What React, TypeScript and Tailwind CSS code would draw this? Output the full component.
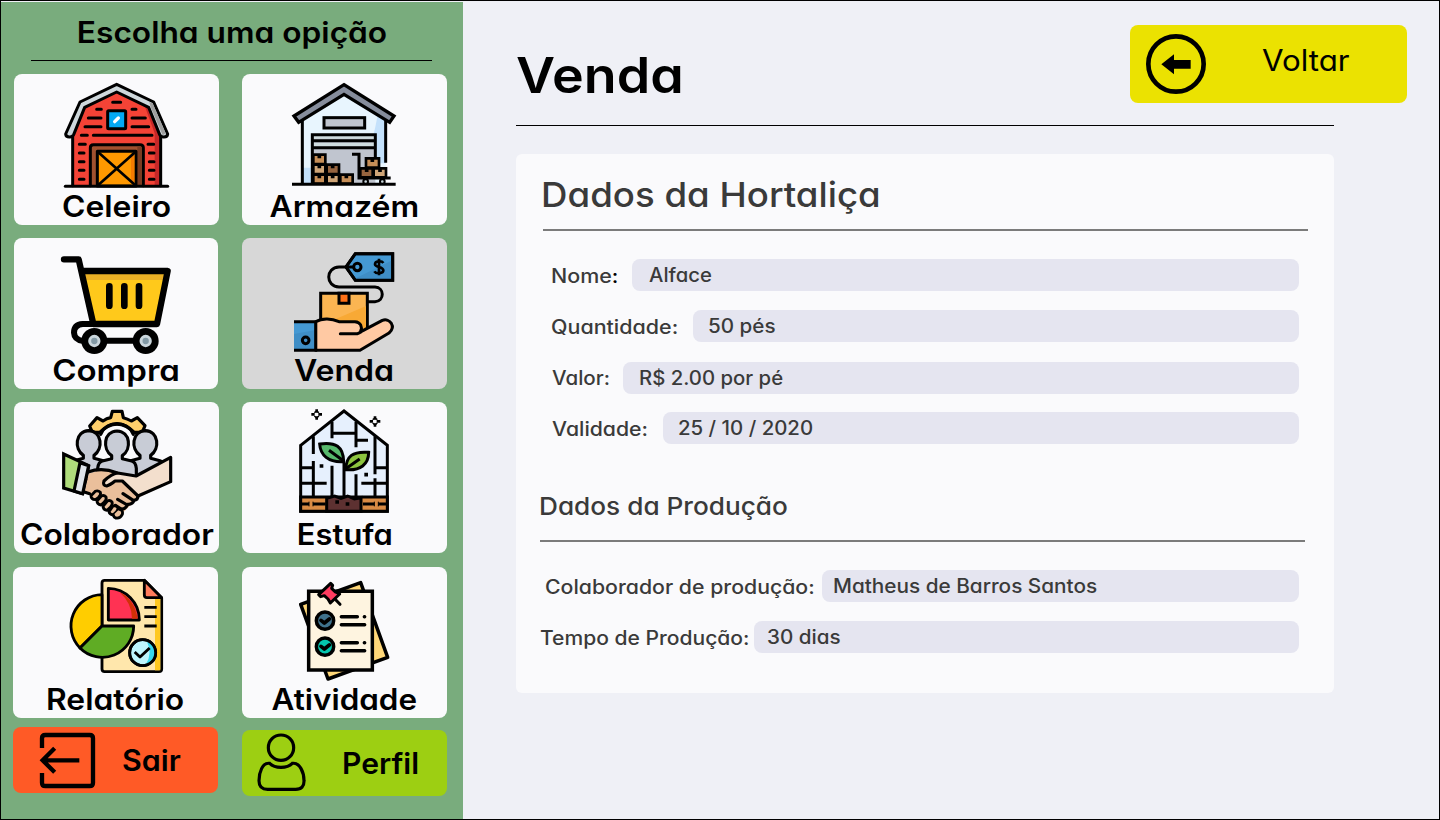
import type { ReactNode } from 'react'

function BarnIcon() {
  return (
    <svg viewBox="42 222 615 360" className="block h-[120px] w-[205px]" fill="none" stroke="#000" strokeWidth="9" strokeLinecap="round" strokeLinejoin="round">
      <path d="M218 557V380L252 320L350 274L448 320L482 380V557Z" fill="#f44336" stroke="none" />
      <path d="M432 312L448 320L482 400V557H464V400Z" fill="#c62828" stroke="none" />
      <path d="M218 412V557M482 412V557" />
      <path d="M350 253L461 306L503 402Q502 412 490 411Q482 411 479 404L446 322L350 276L254 322L221 404Q218 411 210 411Q198 412 197 402L240 306Z" fill="#cfd8dc" />
      <path d="M448 307L458 310L497 400L488 406L452 322Z" fill="#9e9e9e" stroke="none" />
      <path d="M338 307H362M290 328H304M396 328H408M265 354H303M396 354H436M255 380H303M396 380H446M244 406H262M280 406H456M238 433H256M444 433H461M238 459H252M448 459H462M238 485H252M448 485H462M238 511H252M448 511H462M238 538H252M448 538H462" />
      <rect x="323" y="332" width="54" height="54" rx="3" fill="#03a9f4" />
      <path d="M344 365L355 354" stroke="#fff" strokeWidth="10" />
      <path d="M271 557V443Q271 434 280 434H420Q430 434 430 443V557" fill="#a1512f" />
      <path d="M412 438H422L426 443V556H412Z" fill="#7a3c22" stroke="none" />
      <rect x="292" y="454" width="116" height="104" fill="#ff9800" />
      <path d="M393 459H403V553H393Z" fill="#f57c00" stroke="none" />
      <path d="M294 456L406 556M406 456L294 556" strokeWidth="8" />
      <path d="M196 559H503" />
    </svg>
  )
}

function WarehouseIcon() {
  return (
    <svg viewBox="21 222 615 360" className="block h-[120px] w-[205px]" fill="none" stroke="#000" strokeWidth="9">
      <path d="M202 552V360L327 283L452 360V552Z" fill="#e8f5fe" stroke="none" />
      <path d="M428 345L452 360V490H390Q415 420 428 345ZM204 503H230V552H204Z" fill="#c4e1fb" stroke="none" />
      <path d="M202 362V552M452 362V488" />
      <path d="M327 254L477 348L464 367L327 283L191 367L177 348Z" fill="#868d9c" strokeWidth="10" />
      <rect x="267" y="353" width="122" height="31" fill="#c0c5cf" />
      <path d="M232 552V404H421V552" fill="#c0c5cf" stroke="none" />
      <path d="M232 411H421M232 433H421" stroke="#cfdcdf" strokeWidth="10" />
      <path d="M232 552V404H421V472M232 422H421M232 443H421" />
      <g strokeWidth="8">
        <path d="M235 464H271V492H235Z" fill="#c68e57" />
        <path d="M235 494H271V522H235Z" fill="#cfa577" />
        <path d="M275 494H312V522H275Z" fill="#96643f" />
        <path d="M235 524H271V551H235Z" fill="#c68e57" />
        <path d="M275 524H312V551H275Z" fill="#cfa577" />
        <path d="M316 524H353V551H316Z" fill="#c68e57" />
        <path d="M376 505H413V532H376Z" fill="#96643f" />
        <path d="M416 505H453V532H416Z" fill="#cfa577" />
        <path d="M393 475H432V503H393Z" fill="#c68e57" />
      </g>
      <path d="M253 464V475M253 494V505M293 494V505M253 524V535M293 524V535M334 524V535M395 505V516M435 505V516M412 475V486" strokeWidth="11" />
      <path d="M351 463H372V534H467" />
      <circle cx="392" cy="545" r="7" fill="#c9d6dc" strokeWidth="6" />
      <circle cx="442" cy="545" r="7" fill="#c9d6dc" strokeWidth="6" />
      <path d="M171 553H482" />
    </svg>
  )
}

function CartIcon() {
  return (
    <svg viewBox="42 24 612 360" className="block h-[120px] w-[204px]" fill="none" stroke="#000" strokeWidth="19" strokeLinecap="round" strokeLinejoin="round">
      <path d="M247 123H503L471 282H282Z" fill="#ffc91b" stroke="none" />
      <path d="M250 130H496L492 150H254Z" fill="#e9af25" stroke="none" />
      <path d="M192 88H236L280 282H471L503 123H247" />
      <path d="M328 169V227M373 169V227M417 169V227" strokeWidth="20" />
      <path d="M281 282H248Q222 284 222 308Q223 330 250 333" strokeWidth="18" />
      <path d="M283 332H437" strokeWidth="18" />
      <circle cx="283" cy="333" r="39" fill="#000" stroke="none" />
      <circle cx="437" cy="333" r="39" fill="#000" stroke="none" />
      <circle cx="283" cy="333" r="14" fill="#8299a5" stroke="#cad6dc" strokeWidth="9" />
      <circle cx="437" cy="333" r="14" fill="#8299a5" stroke="#cad6dc" strokeWidth="9" />
    </svg>
  )
}

function SellIcon() {
  return (
    <svg viewBox="21 24 615 360" className="block h-[120px] w-[205px]" fill="none" stroke="#000" strokeWidth="9">
      <path d="M361 71H473V151H361L333 111Z" fill="#4599d3" />
      <path d="M469 92L362 145L364 147H469Z" fill="#3f8ec6" stroke="none" />
      <path d="M361 71H473V151H361L333 111Z" />
      <path d="M445 99C440 91 420 92 420 103C420 113 445 109 445 121C445 132 423 132 418 124M432 86V136" strokeWidth="8" />
      <circle cx="367" cy="111" r="11" fill="#4599d3" />
      <path d="M356 111H312C271 112 271 170 312 171H420C449 172 449 214 420 215H398" />
      <path d="M257 190H397V310H257Z" fill="#fbb552" />
      <path d="M393 228L290 272L380 290L393 296Z" fill="#f8a935" stroke="none" />
      <path d="M312 190H342V220H312Z" fill="#ff7016" />
      <path d="M242 275C262 263 290 265 312 275H360C377 276 382 290 378 305L442 271C465 263 484 290 462 309L375 361H242Z" fill="#ffc9a3" strokeLinejoin="round" />
      <path d="M316 311H367Q379 309 379 298" strokeLinecap="round" />
      <path d="M177 275H242V361H177Z" fill="#4599d3" stroke="none" />
      <path d="M177 312L242 300V361H177Z" fill="#3f8ec6" stroke="none" />
      <path d="M177 275H242V361H177" />
      <circle cx="212" cy="331" r="10" strokeWidth="9" />
    </svg>
  )
}

function TeamIcon() {
  const head = 'M-16 43V34C-44 15 -41 -38 0 -40C41 -38 44 15 16 34V43L44 50Q56 53 58 72V110H-58V72Q-56 53 -44 50Z'
  return (
    <svg viewBox="42 21 615 360" className="block h-[120px] w-[205px]" fill="none" stroke="#000" strokeWidth="9.5" strokeLinejoin="round" strokeLinecap="round">
      <path d="M269 93L291 68L309 78Q320 70 332 68L337 49H366L370 68Q382 71 394 78L412 68L435 92L427 112H403Q351 62 299 112H277Z" fill="#ffcf6c" />
      <path d="M302 118Q314 88 351 86Q388 88 400 118" />
      <g fill="#c8ccd6">
        <path d={head} transform="translate(266 147)" />
        <path d={head} transform="translate(436 147)" />
        <path d={head} transform="translate(351 148)" />
      </g>
      <path d="M191 177L266 212L248 296L191 279Z" fill="#afdc7b" strokeLinejoin="miter" />
      <path d="M512 187L410 243L351 230L300 225L266 236L254 290L274 300L345 360L362 360L414 308L512 262Z" fill="#eabf9b" stroke="none" />
      <path d="M264 231Q305 216 350 233" />
      <path d="M240 203L266 212L248 296L222 288Z" fill="#dfe4ea" />
      <path d="M253 291L269 296" />
      <path d="M512 187L408 243L353 234Q335 236 312 258Q307 272 320 273Q330 270 345 258H367L414 303L512 260Z" fill="#f3dfcd" />
      <path d="M414 303Q414 315 402 316Q398 329 383 328Q378 342 365 342" fill="#eabf9b" />
      <path d="M369 296L401 317M353 313L382 330M346 331L366 344" />
      <g fill="#eabf9b" strokeWidth="8.5">
        <path d="M286 289Q294 285 301 292Q304 300 295 308L286 314Q273 313 273 302Z" />
        <path d="M304 303Q312 299 318 306Q321 314 312 322L303 330Q291 328 291 318Z" />
        <path d="M322 318Q330 314 336 321Q339 329 330 338L321 346Q309 344 309 334Z" />
        <path d="M339 333Q348 330 353 337Q356 344 347 353L339 360Q328 358 327 350Z" />
        <path d="M358 343Q370 345 367 358Q360 372 347 369Q341 366 340 360" />
      </g>
    </svg>
  )
}

function GreenhouseIcon() {
  return (
    <svg viewBox="21 21 615 360" className="block h-[120px] w-[205px]" fill="none" stroke="#000" strokeWidth="9">
      <path d="M197 151L327 48L457 151V349H197Z" fill="#e6f0fd" />
      <path d="M291 80V130M291 115H363M363 80V157M363 136H399M235 124V177M420 124V238M235 198V304M197 218H235M420 218H457M197 265H275M379 265H457M420 250V304M291 212V304M363 238V304" />
      <path d="M197 306H457V349H197Z" fill="#d98b44" />
      <path d="M197 327H222M234 327H272M384 327H418M430 327H457" />
      <path d="M228 306V318M228 336V349M424 306V318M424 336V349" stroke="none" />
      <path d="M222 320V334M234 320V334M418 320V334M430 320V334" strokeWidth="3" />
      <path d="M275 349V310L299 303L318 310L338 303L358 312L378 308V349Z" fill="#5d3131" />
      <path d="M301 321H312M332 327H343" strokeWidth="11" />
      <path d="M327 305V204" />
      <path d="M254 147C302 140 325 155 326 200C280 203 256 180 254 147Z" fill="#57b96c" />
      <path d="M282 166L327 199" />
      <path d="M401 172C353 168 334 183 332 224C376 228 401 208 401 172Z" fill="#8cc43f" />
      <path d="M374 192L330 223" />
      <path d="M254 213H265M388 239H399" strokeWidth="11" />
      <path d="M245 43V53M245 64V74M229 58H239M250 58H261M420 64V74M420 85V95M404 79H414M425 79H436" strokeWidth="8" />
      <path d="M238 53L245 48L252 53M238 63L245 69L252 63M413 74L420 69L427 74M413 84L420 90L427 84" strokeWidth="4" />
    </svg>
  )
}

function ReportIcon() {
  return (
    <svg viewBox="39 21 615 360" className="block h-[120px] w-[205px]" fill="none" stroke="#000" strokeWidth="8.5" strokeLinejoin="round">
      <path d="M314 61H433L485 113V327Q485 335 477 335H314Q306 335 306 327V69Q306 61 314 61Z" fill="#ffe7ac" />
      <path d="M465 116H481V331H465Z" fill="#ffc81f" stroke="none" />
      <path d="M433 61V105Q433 113 441 113H485Z" fill="#ff7c5c" />
      <path d="M433 142H470M433 170H470M433 198H470" />
      <path d="M306 198V104A94 94 0 0 0 240 264Z" fill="#ffcd00" />
      <path d="M306 198H401A94 94 0 0 1 240 264Z" fill="#5fac24" />
      <path d="M325 180V85A94 94 0 0 1 418 180Z" fill="#ff3253" />
      <path d="M359 97Q403 117 413 176H396Q396 130 359 97Z" fill="#d13107" stroke="none" />
      <circle cx="428" cy="278" r="39" fill="#bdf5fd" />
      <path d="M441 245A35 35 0 0 1 438 312Q458 280 441 245Z" fill="#37d8ee" stroke="none" />
      <path d="M404 276L420 291L449 264" />
      <circle cx="428" cy="278" r="39" />
    </svg>
  )
}

function TasksIcon() {
  return (
    <svg viewBox="21 21 615 360" className="block h-[120px] w-[205px]" fill="none" stroke="#000" strokeWidth="10.5" strokeLinejoin="round">
      <path d="M197 133L377 68L458 292L279 357Z" fill="#ffd778" />
      <path d="M221 94H412V330H221Z" fill="#fef4e0" strokeLinejoin="miter" />
      <path d="M287 70L293 76L290 85L301 96L314 102L286 129L279 117L268 107L257 110L251 104Z" fill="#ff3c60" strokeWidth="9" />
      <path d="M302 119L315 133" strokeLinecap="round" strokeWidth="9" />
      <circle cx="270" cy="182" r="26" fill="#3f728d" />
      <circle cx="270" cy="260" r="26" fill="#04c5ad" />
      <path d="M258 181L268 189L283 177M258 259L268 267L283 255" strokeLinecap="round" strokeWidth="11" />
      <path d="M319 170H367M388 170H389M319 194H389M319 248H367M388 248H389M319 272H389" strokeLinecap="round" />
    </svg>
  )
}

function Card({ icon, label, box, stretch }: { icon: ReactNode; label: string; box: string; stretch: string }) {
  return (
    <button type="button" className={`flex h-[151px] flex-col items-center rounded-lg ${box}`}>
      {icon}
      <span className={`whitespace-nowrap text-[29.5px] leading-6 font-semibold ${stretch}`}>{label}</span>
    </button>
  )
}

type FieldProps = { label: ReactNode; value: string; row: string; labelBox: string; labelStretch: string; inputPad: string; valueStretch: string }

function Field({ label, value, row, labelBox, labelStretch, inputPad, valueStretch }: FieldProps) {
  return (
    <div className={`flex h-8 pr-[35px] text-[19.5px] leading-8 font-medium whitespace-nowrap text-[#3a3a3a] ${row}`}>
      <div className={`shrink-0 ${labelBox}`}>
        <span className={`inline-block origin-left ${labelStretch}`}>{label}</span>
      </div>
      <div className={`h-8 flex-1 rounded-lg bg-[#e5e5f0] ${inputPad}`}>
        <span className={`inline-block origin-left ${valueStretch}`}>{value}</span>
      </div>
    </div>
  )
}

export default function App() {
  return (
    <div className="flex h-[820px] w-[1440px] overflow-hidden border border-black bg-[#eff0f6] font-['Inter','Liberation_Sans',sans-serif] text-black [font-feature-settings:'cv11']">
      <aside className="mt-px flex w-[462px] shrink-0 flex-col bg-[#79ac7d]">
        <h2 className="mt-[15px] scale-x-[1.074] text-center text-[29.5px] leading-[30px] font-semibold">Escolha uma opição</h2>
        <div className="mt-[13px] ml-[30px] h-px w-[401px] bg-black" />
        <div className="mt-[13px] flex gap-[23px] pl-3">
          <div className="flex w-[206px] flex-col">
            <Card icon={<BarnIcon />} label="Celeiro" box="ml-px w-[205px] bg-[#fafafc]" stretch="scale-x-[1.079]" />
            <Card icon={<CartIcon />} label="Compra" box="mt-[13px] ml-px w-[204px] bg-[#fafafc]" stretch="scale-x-[1.12]" />
            <Card icon={<TeamIcon />} label="Colaborador" box="mt-[13px] ml-px w-[205px] bg-[#fafafc]" stretch="scale-x-[1.078]" />
            <Card icon={<ReportIcon />} label="Relatório" box="mt-[14px] w-[205px] bg-[#fafafc]" stretch="scale-x-[1.078]" />
            <button type="button" className="mt-[9px] flex h-[66px] w-[205px] items-center rounded-lg bg-[#ff5a26] pl-[25px]">
              <svg viewBox="114 516 177 171" className="h-[57px] w-[59px]" fill="none" stroke="#000" strokeWidth="13">
                <path d="M126 564V535Q126 525 136 525H269Q279 525 279 535V668Q279 678 269 678H136Q126 678 126 668V639" />
                <path d="M238 601H128M164 565L128 601L164 637" />
              </svg>
              <span className="ml-[25px] origin-left scale-x-[1.03] text-[29.5px] leading-[30px] font-semibold">Sair</span>
            </button>
          </div>
          <div className="flex w-[205px] flex-col">
            <Card icon={<WarehouseIcon />} label="Armazém" box="w-[205px] bg-[#fafafc]" stretch="scale-x-[1.08]" />
            <Card icon={<SellIcon />} label="Venda" box="mt-[13px] w-[205px] bg-[#d7d7d7]" stretch="scale-x-[1.087]" />
            <Card icon={<GreenhouseIcon />} label="Estufa" box="mt-[13px] w-[205px] bg-[#fafafc]" stretch="scale-x-[1.048]" />
            <Card icon={<TasksIcon />} label="Atividade" box="mt-[14px] w-[205px] bg-[#fafafc]" stretch="scale-x-[1.065]" />
            <button type="button" className="mt-3 flex h-[66px] w-[205px] items-center rounded-lg bg-[#9dcf12] pl-[14px]">
              <svg viewBox="63 516 153 180" className="mb-0.5 h-[60px] w-[51px]" fill="none" stroke="#000" strokeWidth="9.5">
                <circle cx="138" cy="563" r="38" />
                <path d="M104 610C82 607 72 638 72 662Q72 688 98 688H182Q208 688 207 662C207 638 195 607 172 610Q160 622 138 622Q116 622 104 610Z" />
              </svg>
              <span className="ml-[35px] origin-left scale-x-[1.02] text-[29.5px] leading-[30px] font-semibold">Perfil</span>
            </button>
          </div>
        </div>
      </aside>

      <main className="flex-1 pl-[53px]">
        <header className="flex h-[124px] items-start justify-between pr-8">
          <h1 className="mt-[50px] origin-left scale-x-[1.097] text-[49px] leading-[50px] font-semibold">Venda</h1>
          <button type="button" className="mt-6 flex h-[78px] w-[277px] rounded-lg bg-[#ebe201] pl-4">
            <svg viewBox="78 102 180 180" className="mt-[9px] h-[60px] w-[60px]">
              <circle cx="168" cy="192" r="83" fill="none" stroke="#000" strokeWidth="14" />
              <path d="M124 193L162 163V180H212V206H162V223Z" />
            </svg>
            <span className="mt-5 ml-[56px] origin-left scale-x-[1.06] text-[29.5px] leading-[30px] font-normal">Voltar</span>
          </button>
        </header>
        <div className="h-px w-[818px] bg-black" />

        <section className="mt-7 h-[539px] w-[818px] rounded-md bg-[#fafafc] pt-5">
          <h2 className="origin-left pl-6 text-[34.5px] leading-[41px] font-medium text-[#3a3a3a]">
            <span className="inline-block origin-left scale-x-[1.062] pl-px">Dados da Hortaliça</span>
          </h2>
          <div className="mt-[14px] ml-[27px] h-0.5 w-[765px] bg-[#7b7b7b]" />
          <Field label={<>Nome<span className="text-black">:</span></>} value="Alface" row="mt-7 pl-[35px]" labelBox="w-[81px] pt-px" labelStretch="scale-x-[1.1]" inputPad="pl-[17px]" valueStretch="scale-x-[1.04]" />
          <Field label="Quantidade:" value="50 pés" row="mt-[19px] pl-[35px]" labelBox="w-[142px] pt-px" labelStretch="scale-x-[1.1]" inputPad="pl-[15px]" valueStretch="scale-x-[1.058]" />
          <Field label="Valor:" value="R$ 2.00 por pé" row="mt-5 pl-9" labelBox="w-[71px]" labelStretch="scale-x-[1.055]" inputPad="pl-4" valueStretch="scale-x-[1.042]" />
          <Field label="Validade:" value="25 / 10 / 2020" row="mt-[18px] pl-9" labelBox="w-[111px] pt-px" labelStretch="scale-x-[1.089]" inputPad="pl-[15px]" valueStretch="scale-x-[1.046]" />

          <h3 className="mt-[47px] pl-[23px] text-[24.5px] leading-[30px] font-medium text-[#3a3a3a]">
            <span className="inline-block origin-left scale-x-[1.069]">Dados da Produção</span>
          </h3>
          <div className="mt-[19px] ml-6 h-0.5 w-[765px] bg-[#7b7b7b]" />
          <Field label="Colaborador de produção:" value="Matheus de Barros Santos" row="mt-7 pl-[29px]" labelBox="w-[277px] pt-px" labelStretch="scale-x-[1.091]" inputPad="pl-[11px]" valueStretch="scale-x-[1.064]" />
          <Field label="Tempo de Produção:" value="30 dias" row="mt-[19px] pl-6" labelBox="w-[214px] pt-px" labelStretch="scale-x-[1.08]" inputPad="pl-[13px]" valueStretch="scale-x-[1.058]" />
        </section>
      </main>
    </div>
  )
}
